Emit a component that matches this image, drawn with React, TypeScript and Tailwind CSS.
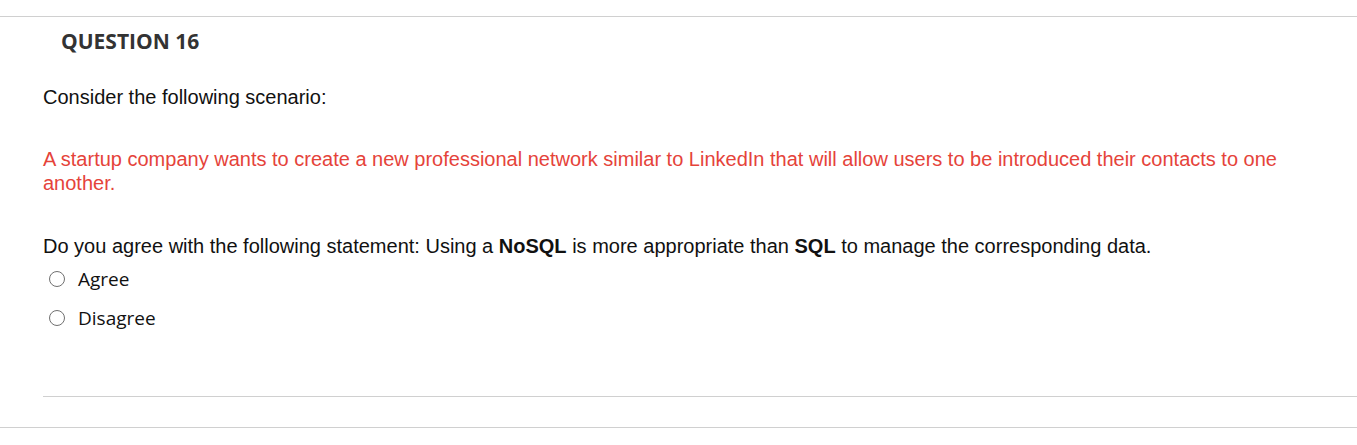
const body = "font-['Liberation_Sans',Arial,sans-serif] text-[20px] leading-[24px] text-[#111]"
const openSans = "font-['Open_Sans','Noto_Sans',sans-serif]"

function Radio({ label, className = '' }: { label: string; className?: string }) {
  return (
    <label className={`flex items-center h-[24px] ${className}`}>
      <span className="ml-[6px] mr-[13px] w-[16px] h-[16px] rounded-full border-[1.5px] border-[#707070] bg-white" />
      <span className={`${openSans} text-[19px] leading-[24px] text-[#111]`}>{label}</span>
    </label>
  )
}

export default function App() {
  return (
    <div className="bg-white w-full h-[445px] overflow-hidden pt-4">
      <section className="border-t border-[#d0d0d0]">
        <h2 className={`${openSans} pl-[61px] pt-[10px] text-[21px] leading-[28px] font-bold text-[#333]`}>
          QUESTION 16
        </h2>

        <div className="pl-[43px] pr-[60px]">
          <p className={`${body} mt-[30px]`}>Consider the following scenario:</p>

          <p className={`${body} mt-[38px] !text-[#e5433a]`}>
            A startup company wants to create a new professional network similar to LinkedIn that will allow users to be introduced their contacts to one another.
          </p>

          <p className={`${body} mt-[39px]`}>
            Do you agree with the following statement: Using a <b>NoSQL</b> is more appropriate than <b>SQL</b> to manage the
            corresponding data.
          </p>

          <div className="mt-[9px] flex flex-col gap-[15px]">
            <Radio label="Agree" />
            <Radio label="Disagree" />
          </div>
        </div>

        <div className="ml-[43px] mt-[66px] border-t border-[#d0d0d0]" />
      </section>

      <section className="mt-[30px] border-t border-[#d0d0d0]">
        <h2 className={`${openSans} pl-[61px] pt-[10px] text-[21px] leading-[28px] font-bold text-[#333]`}>
          QUESTION 17
        </h2>
      </section>
    </div>
  )
}
